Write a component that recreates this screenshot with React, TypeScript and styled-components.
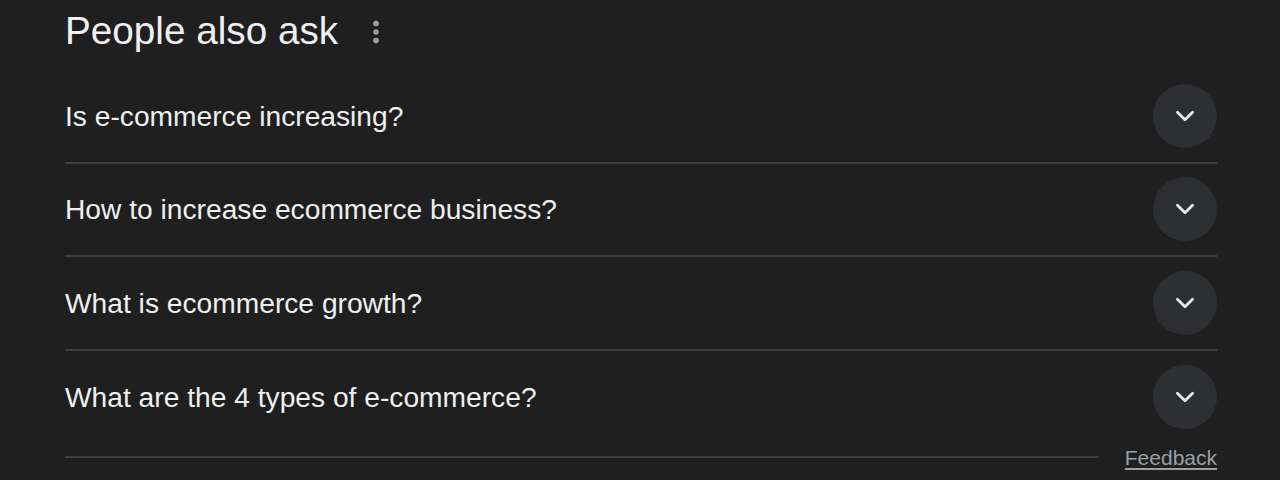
import React from 'react'
import styled, { createGlobalStyle } from 'styled-components'

const GlobalStyle = createGlobalStyle`
  html, body {
    margin: 0;
    background: #1f1f1f;
  }
  body {
    font-family: "Liberation Sans", Arial, sans-serif;
  }
`

const Page = styled.div`
  width: 1280px;
  height: 480px;
  background: #1f1f1f;
  overflow: hidden;
`

const Section = styled.section`
  width: 1152px;
  margin-left: 65px;
  display: flex;
  flex-direction: column;
`

const Header = styled.div`
  height: 62px;
  margin-bottom: 8px;
  display: flex;
  align-items: center;
  gap: 33px;
`

const Title = styled.h2`
  margin: 0;
  font-size: 38.7px;
  font-weight: 400;
  color: #eeeff1;
  line-height: 1.15;
`

const MenuButton = styled.span`
  display: flex;
  align-items: center;
  justify-content: center;
  width: 10px;
  height: 26px;
  margin-top: 2px;
`

const Question = styled.div<{ last?: boolean }>`
  box-sizing: border-box;
  height: 93.5px;
  display: flex;
  align-items: center;
  justify-content: space-between;
  border-bottom: ${(p) => (p.last ? 'none' : '2px solid #3c4043')};
`

const QuestionText = styled.span`
  font-size: 28.2px;
  color: #eeeff1;
  line-height: 1.15;
`

const Toggle = styled.span`
  width: 64px;
  height: 64px;
  border-radius: 50%;
  background: #2e2f32;
  display: flex;
  align-items: center;
  justify-content: center;
`

const Footer = styled.div`
  height: 26px;
  display: flex;
  align-items: center;
  gap: 26px;
`

const FooterLine = styled.div`
  flex: 1;
  height: 2px;
  background: #3c4043;
`

const FeedbackLink = styled.a`
  font-size: 21px;
  color: #9aa0a6;
  text-decoration: underline;
  text-underline-offset: 3px;
  line-height: 1;
`

const questions = [
  'Is e-commerce increasing?',
  'How to increase ecommerce business?',
  'What is ecommerce growth?',
  'What are the 4 types of e-commerce?',
]

function Chevron() {
  return (
    <svg width="28" height="28" viewBox="0 0 24 24">
      <path
        d="M5.5 8.8 L12 15.2 L18.5 8.8"
        fill="none"
        stroke="#e8eaed"
        strokeWidth="2.4"
        strokeLinecap="round"
        strokeLinejoin="round"
      />
    </svg>
  )
}

function Dots() {
  return (
    <svg width="8" height="26" viewBox="0 0 8 26">
      <circle cx="4" cy="4.5" r="2.8" fill="#9aa0a6" />
      <circle cx="4" cy="13" r="2.8" fill="#9aa0a6" />
      <circle cx="4" cy="21.5" r="2.8" fill="#9aa0a6" />
    </svg>
  )
}

export default function App() {
  return (
    <Page>
      <GlobalStyle />
      <Section>
        <Header>
          <Title>People also ask</Title>
          <MenuButton>
            <Dots />
          </MenuButton>
        </Header>
        {questions.map((q, i) => (
          <Question key={i} last={i === questions.length - 1}>
            <QuestionText>{q}</QuestionText>
            <Toggle>
              <Chevron />
            </Toggle>
          </Question>
        ))}
        <Footer>
          <FooterLine />
          <FeedbackLink href="#">Feedback</FeedbackLink>
        </Footer>
      </Section>
    </Page>
  )
}
